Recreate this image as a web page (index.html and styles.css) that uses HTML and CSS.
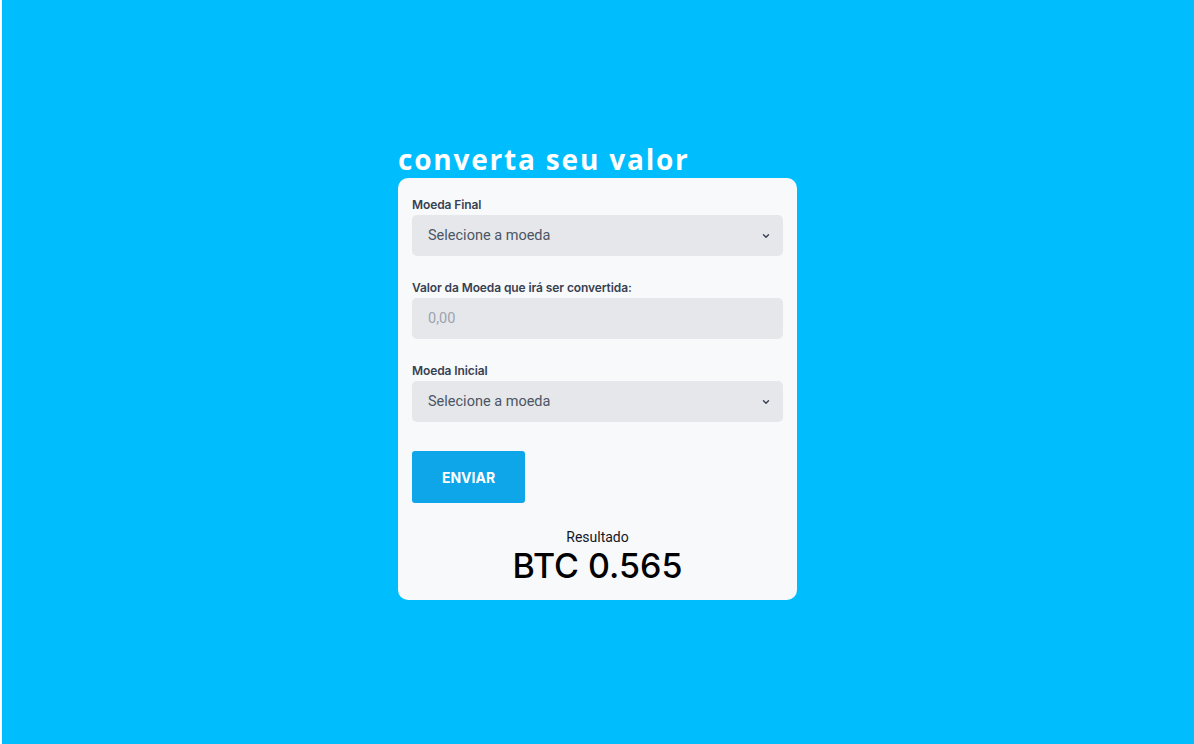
FILE: index.html
```html
<!DOCTYPE html>
<html lang="pt-BR">
<head>
<meta charset="utf-8">
<title>Conversor</title>
<link rel="stylesheet" href="styles.css">
</head>
<body>
<main class="page">
  <section class="wrap">
    <h1 class="title">converta seu valor</h1>
    <form class="card">
      <label class="field">
        <span class="label">Moeda Final</span>
        <span class="select">
          <span class="select-text">Selecione a moeda</span>
          <svg class="chev" width="10" height="10" viewBox="0 0 10 10"><path d="M2.5 3.8 L5 6.3 L7.5 3.8" fill="none" stroke="#374151" stroke-width="1.4" stroke-linecap="round" stroke-linejoin="round"/></svg>
        </span>
      </label>
      <label class="field">
        <span class="label">Valor da Moeda que irá ser convertida:</span>
        <span class="input"><span class="placeholder">0,00</span></span>
      </label>
      <label class="field">
        <span class="label">Moeda Inicial</span>
        <span class="select">
          <span class="select-text">Selecione a moeda</span>
          <svg class="chev" width="10" height="10" viewBox="0 0 10 10"><path d="M2.5 3.8 L5 6.3 L7.5 3.8" fill="none" stroke="#374151" stroke-width="1.4" stroke-linecap="round" stroke-linejoin="round"/></svg>
        </span>
      </label>
      <div class="actions"><span class="btn">ENVIAR</span></div>
      <div class="result">
        <div class="result-label">Resultado</div>
        <div class="result-value">BTC 0.565</div>
      </div>
    </form>
  </section>
</main>
</body>
</html>
```

FILE: styles.css
```css
html { background: #ffffff; }
body {
  margin: 0;
  font-family: Inter, Roboto, "Liberation Sans", sans-serif;
}
.page {
  margin-left: 2px;
  padding-right: 1px;
  height: 744px;
  background: #00bdfe;
  display: flex;
  align-items: center;
  justify-content: center;
}
.wrap {
  width: 399px;
  display: flex;
  flex-direction: column;
  margin-top: -1px;
}
.title {
  margin: 0 0 3px;
  font-family: "Open Sans", sans-serif;
  font-weight: 700;
  font-size: 28px;
  line-height: 32px;
  letter-spacing: 1.8px;
  color: #ffffff;
}
.card {
  background: #f8f9fb;
  border-radius: 10px;
  padding: 19px 14px 14px;
  display: flex;
  flex-direction: column;
}
.field {
  display: flex;
  flex-direction: column;
  margin-bottom: 24px;
}
.label {
  font-size: 12px;
  font-weight: 600;
  color: #374151;
  line-height: 16px;
  margin-bottom: 2px;
  letter-spacing: -0.1px;
}
.select, .input {
  height: 41px;
  background: #e5e7eb;
  border-radius: 5px;
  display: flex;
  align-items: center;
  justify-content: space-between;
  padding: 0 12px 0 16px;
  font-family: Roboto, sans-serif;
  font-size: 14.5px;
}
.select-text { color: #4b5563; }
.placeholder { color: #9ca3af; }
.chev { display: block; }
.actions {
  margin-top: 5px;
  display: flex;
}
.btn {
  width: 113px;
  height: 52px;
  background: #0ea5e9;
  color: #ffffff;
  border-radius: 3px;
  display: flex;
  align-items: center;
  justify-content: center;
  font-weight: 700;
  font-size: 14px;
}
.result {
  margin-top: 25px;
  text-align: center;
}
.result-label {
  font-family: Roboto, sans-serif;
  font-size: 14px;
  line-height: 18px;
  color: #111827;
}
.result-value {
  font-size: 34px;
  font-weight: 500;
  line-height: 40px;
  color: #000000;
}
```
